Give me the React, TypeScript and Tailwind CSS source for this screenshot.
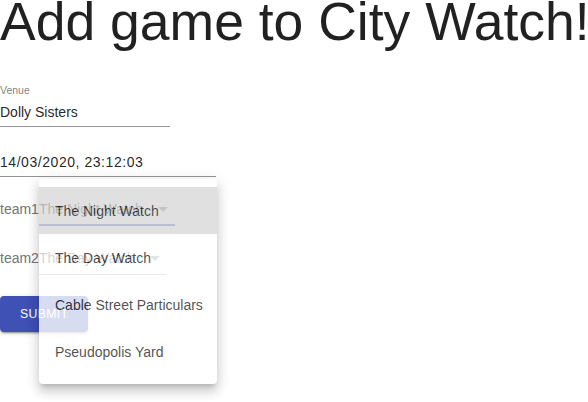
import React from "react";

const teams = [
  "The Night Watch",
  "The Day Watch",
  "Cable Street Particulars",
  "Pseudopolis Yard",
];

function Arrow() {
  return (
    <svg
      viewBox="0 0 24 24"
      className="absolute right-0 top-[calc(50%-12px)] w-6 h-6 fill-[rgba(0,0,0,0.54)]"
    >
      <path d="M7 10l5 5 5-5z" />
    </svg>
  );
}

function TeamRow({
  label,
  value,
  focused,
}: {
  label: string;
  value: string;
  focused?: boolean;
}) {
  return (
    <div className="flex items-end">
      <span className="text-[14px] leading-[20px] pb-[7px] text-[#757575]">
        {label}
      </span>
      <div
        className={
          focused
            ? "relative pt-[6px] pb-[5px] pr-[32px] border-b-2 border-[#3f51b5]"
            : "relative pt-[6px] pb-[6px] pr-[32px] border-b border-[rgba(0,0,0,0.42)]"
        }
      >
        <div className="text-[14px] leading-[20px] text-[rgba(0,0,0,0.87)] whitespace-nowrap">
          {value}
        </div>
        <Arrow />
      </div>
    </div>
  );
}

export default function App() {
  return (
    <div
      className="relative w-[588px] h-[402px] overflow-hidden bg-white"
      style={{ fontFamily: '"Liberation Sans", Arial, sans-serif' }}
    >
      <h1 className="text-[53.5px] leading-[44px] font-normal text-[rgba(0,0,0,0.87)] whitespace-nowrap">
        Add game to City Watch!
      </h1>

      <form className="flex flex-col items-start">
        <div className="mt-[40px] w-[170px]">
          <div className="text-[10.5px] leading-[12px] text-[rgba(0,0,0,0.54)]">
            Venue
          </div>
          <div className="pt-[6px] pb-[4px] border-b border-[rgba(0,0,0,0.42)] text-[14px] leading-[20px] text-[rgba(0,0,0,0.87)]">
            Dolly Sisters
          </div>
        </div>

        <div className="mt-[19px] w-[216px] pt-[6px] pb-[4px] border-b border-[rgba(0,0,0,0.42)] text-[14px] leading-[20px] tracking-[0.55px] text-[rgba(0,0,0,0.87)]">
          14/03/2020, 23:12:03
        </div>

        <div className="mt-[16px]">
          <TeamRow label="team1" value="The Night Watch" focused />
        </div>
        <div className="mt-[16px]">
          <TeamRow label="team2" value="The Day Watch" />
        </div>

        <button
          type="button"
          className="mt-[21px] h-[36px] px-[20px] rounded-[4px] bg-[#3f51b5] text-white text-[12.25px] tracking-[0.35px] uppercase shadow-[0px_3px_1px_-2px_rgba(0,0,0,0.2),0px_2px_2px_0px_rgba(0,0,0,0.14),0px_1px_5px_0px_rgba(0,0,0,0.12)]"
        >
          Submit
        </button>
      </form>

      <ul className="absolute left-[39px] top-[179px] w-[178px] py-[8px] bg-white rounded-[4px] opacity-80 shadow-[0px_5px_5px_-3px_rgba(0,0,0,0.2),0px_8px_10px_1px_rgba(0,0,0,0.14),0px_3px_14px_2px_rgba(0,0,0,0.12)]">
        {teams.map((t, i) => (
          <li
            key={t}
            className={
              i === 0
                ? "h-[47.25px] flex items-center px-[16px] bg-[#d9d9d9] text-[14px] leading-[20px] text-[rgba(0,0,0,0.87)] whitespace-nowrap"
                : "h-[47.25px] flex items-center px-[16px] text-[14px] leading-[20px] text-[rgba(0,0,0,0.87)] whitespace-nowrap"
            }
          >
            {t}
          </li>
        ))}
      </ul>
    </div>
  );
}
